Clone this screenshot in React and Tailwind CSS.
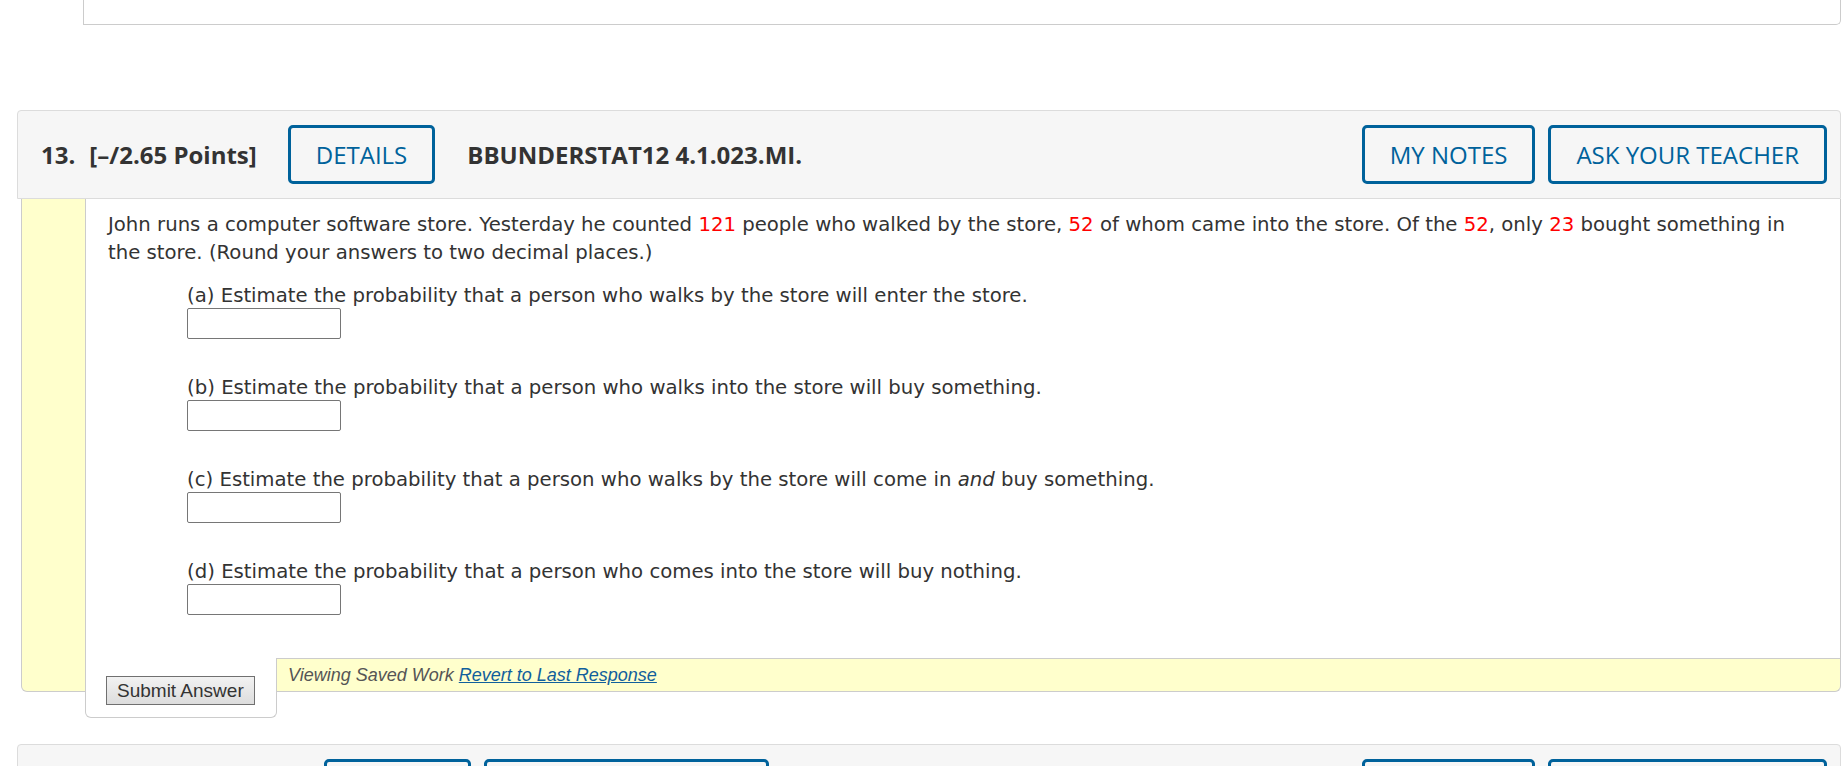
import React from 'react';

function HeaderButton({ children }) {
  return (
    <button
      type="button"
      className="h-[59px] px-[25px] border-[3px] border-[#00629b] rounded-[5px] bg-transparent text-[#00629b] text-[24px] leading-none font-normal whitespace-nowrap"
    >
      {children}
    </button>
  );
}

function QuestionHeader({ number, points, left, code }) {
  return (
    <div className="flex items-center h-[89px] pl-[23px] pr-[13px] bg-[#f6f6f6] border border-[#dcdcdc] rounded-t-[4px] [font-family:'Open_Sans',sans-serif] text-[#333333]">
      <span className="font-bold text-[24px] whitespace-nowrap">{number}</span>
      <span className="font-bold text-[24px] ml-[14px] whitespace-nowrap">{points}</span>
      <div className="flex gap-[13px] ml-[31px]">
        {left.map((b) => (
          <HeaderButton key={b}>{b}</HeaderButton>
        ))}
      </div>
      <span className="font-bold text-[24px] ml-[32px] whitespace-nowrap">{code}</span>
      <div className="flex gap-[13px] ml-auto">
        <HeaderButton>MY NOTES</HeaderButton>
        <HeaderButton>ASK YOUR TEACHER</HeaderButton>
      </div>
    </div>
  );
}

function Part({ label, children }) {
  return (
    <div>
      <div className="pt-[3px] leading-[25px]">
        {label} {children}
      </div>
      <input
        type="text"
        className="block w-[154px] h-[31px] border border-[#767676] rounded-[2px] bg-white"
      />
    </div>
  );
}

const Red = ({ children }) => <span className="text-[#ff0000]">{children}</span>;

export default function App() {
  return (
    <div className="min-h-screen bg-white pl-[17px] pr-[2px]">
      {/* tail of the previous question */}
      <div className="ml-[66px] h-[25px] bg-white border-x border-b border-[#cccccc] rounded-br-[5px]" />

      <div className="mt-[85px]">
        <QuestionHeader
          number="13."
          points="[–/2.65 Points]"
          left={['DETAILS']}
          code="BBUNDERSTAT12 4.1.023.MI."
        />

        <div className="ml-[4px] flex bg-[#ffffcc] border-x border-b border-[#cccccc] rounded-b-[6px]">
          <div className="w-[63px] shrink-0" />
          <div className="flex-1 min-w-0 flex flex-col">
            <div className="bg-white border-l border-b border-[#cccccc] pl-[22px] pr-[40px] pt-[12px] pb-[43px] [font-family:'DejaVu_Sans',sans-serif] text-[19.7px] leading-[28px] text-[#333333]">
              <p>
                John runs a computer software store. Yesterday he counted <Red>121</Red> people who
                walked by the store, <Red>52</Red> of whom came into the store. Of the <Red>52</Red>,
                only <Red>23</Red> bought something in the store. (Round your answers to two decimal
                places.)
              </p>
              <div className="pl-[79px] mt-[13px] flex flex-col gap-[33px]">
                <Part label="(a)">
                  Estimate the probability that a person who walks by the store will enter the store.
                </Part>
                <Part label="(b)">
                  Estimate the probability that a person who walks into the store will buy something.
                </Part>
                <Part label="(c)">
                  Estimate the probability that a person who walks by the store will come in{' '}
                  <i>and</i> buy something.
                </Part>
                <Part label="(d)">
                  Estimate the probability that a person who comes into the store will buy nothing.
                </Part>
              </div>
            </div>

            <div className="flex h-[32px]">
              <div className="-mt-px h-[60px] w-[192px] shrink-0 bg-white border-x border-b border-[#cccccc] rounded-b-[6px] pl-[20px] pt-[18px]">
                <button
                  type="button"
                  className="h-[29px] px-[10px] border border-[#707070] bg-gradient-to-b from-[#f2f2f2] to-[#dddddd] text-[#333333] text-[19px] leading-none [font-family:'Liberation_Sans',Arial,sans-serif] whitespace-nowrap"
                >
                  Submit Answer
                </button>
              </div>
              <div className="flex items-center pl-[11px] [font-family:'Liberation_Sans',Arial,sans-serif] italic text-[18px] text-[#555555] whitespace-nowrap">
                Viewing Saved Work&nbsp;
                <a href="#" className="text-[#11609c] underline">
                  Revert to Last Response
                </a>
              </div>
            </div>
          </div>
        </div>
      </div>

      <div className="mt-[52px]">
        <QuestionHeader
          number="14."
          points="[1.32/2.65 Points]"
          left={['DETAILS', 'PREVIOUS ANSWERS']}
          code="BBUNDERSTAT12 4.1.024."
        />
      </div>
    </div>
  );
}
